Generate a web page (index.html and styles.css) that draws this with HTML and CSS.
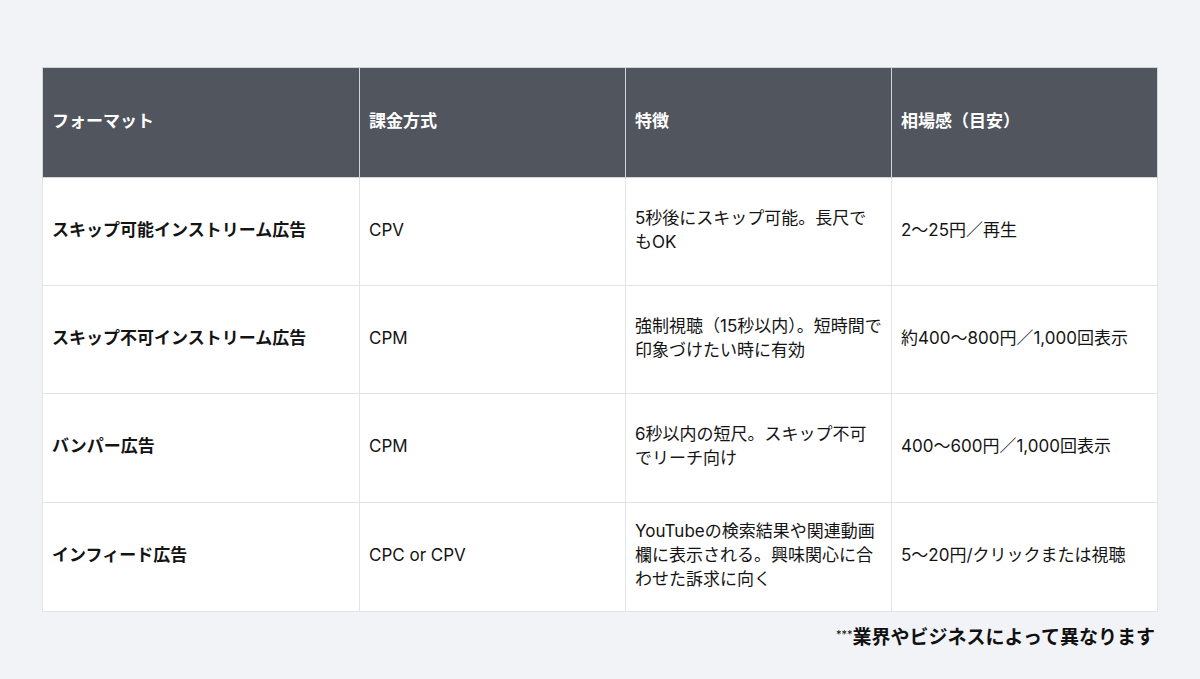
FILE: index.html
```html
<!DOCTYPE html>
<html lang="ja">
<head>
<meta charset="utf-8">
<link rel="stylesheet" href="styles.css">
</head>
<body>
<main class="page">
  <table class="ads">
    <colgroup>
      <col class="c1"><col class="c2"><col class="c3"><col class="c4">
    </colgroup>
    <thead>
      <tr>
        <th>フォーマット</th>
        <th>課金方式</th>
        <th>特徴</th>
        <th>相場感（目安）</th>
      </tr>
    </thead>
    <tbody>
      <tr class="r1">
        <td class="name">スキップ可能インストリーム広告</td>
        <td>CPV</td>
        <td>5秒後にスキップ可能。長尺で<br>もOK</td>
        <td>2〜25円／再生</td>
      </tr>
      <tr class="r2">
        <td class="name">スキップ不可インストリーム広告</td>
        <td>CPM</td>
        <td>強制視聴（15秒以内）。短時間で<br>印象づけたい時に有効</td>
        <td>約400〜800円／1,000回表示</td>
      </tr>
      <tr class="r3">
        <td class="name">バンパー広告</td>
        <td>CPM</td>
        <td>6秒以内の短尺。スキップ不可<br>でリーチ向け</td>
        <td>400〜600円／1,000回表示</td>
      </tr>
      <tr class="r4">
        <td class="name">インフィード広告</td>
        <td>CPC or CPV</td>
        <td>YouTubeの検索結果や関連動画<br>欄に表示される。興味関心に合<br>わせた訴求に向く</td>
        <td>5〜20円/クリックまたは視聴</td>
      </tr>
    </tbody>
  </table>
  <p class="note"><span class="stars">***</span>業界やビジネスによって異なります</p>
</main>
</body>
</html>
```

FILE: styles.css
```css
html, body {
  margin: 0;
  padding: 0;
  background: #f2f3f7;
}

body {
  font-family: "Inter", "Noto Sans CJK JP", sans-serif;
  color: #111111;
  width: 1200px;
  height: 679px;
  overflow: hidden;
}

.page {
  padding: 67px 43px 0 42px;
}

.ads {
  width: 1115px;
  table-layout: fixed;
  border-collapse: collapse;
  background: #ffffff;
  font-size: 17px;
  line-height: 24px;
}

.c1 { width: 317px; }
.c2 { width: 266px; }
.c3 { width: 266px; }
.c4 { width: 266px; }

.ads th,
.ads td {
  border: 1px solid #e3e4e8;
  padding: 0 4px 4px 9px;
  text-align: left;
  vertical-align: middle;
  white-space: nowrap;
}

.ads thead tr {
  height: 110px;
}

.ads th {
  background: #51555e;
  color: #ffffff;
  font-weight: 700;
  border-color: #d2d3d8;
}

.ads td {
  font-weight: 400;
  color: #141414;
}

.ads td.name {
  font-weight: 700;
}

.r1 { height: 108px; }
.r2 { height: 108px; }
.r3 { height: 109px; }
.r4 { height: 109px; }

.note {
  margin: 13px 0 0;
  text-align: right;
  font-size: 19px;
  font-weight: 700;
  line-height: 26px;
  color: #111111;
  padding-right: 2px;
}

.stars {
  font-size: 11px;
  font-weight: 400;
  vertical-align: 6px;
  line-height: 0;
}
```
